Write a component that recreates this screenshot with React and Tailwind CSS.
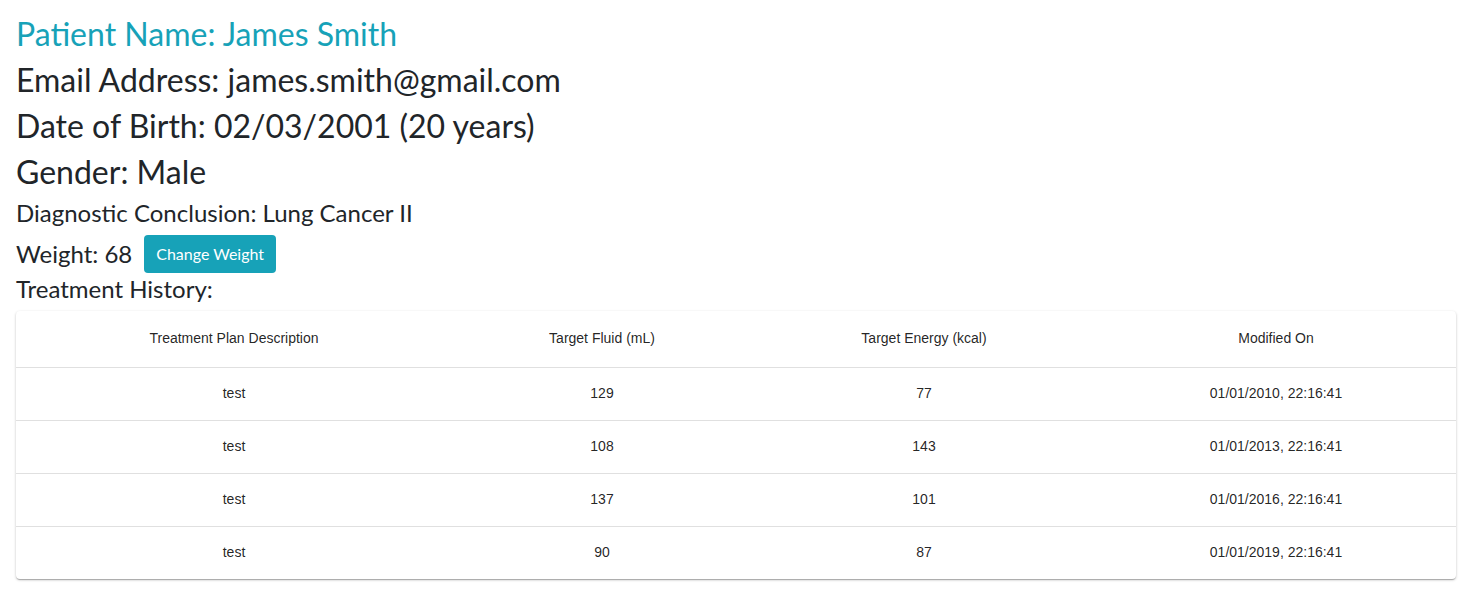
const rows = [
  { desc: "test", fluid: 129, energy: 77, modified: "01/01/2010, 22:16:41" },
  { desc: "test", fluid: 108, energy: 143, modified: "01/01/2013, 22:16:41" },
  { desc: "test", fluid: 137, energy: 101, modified: "01/01/2016, 22:16:41" },
  { desc: "test", fluid: 90, energy: 87, modified: "01/01/2019, 22:16:41" },
];

export default function App() {
  return (
    <div className="bg-white min-h-screen pl-4 pr-[27px] pt-[15px] text-[#212529] font-['Lato','Open_Sans',sans-serif]">
      <h2 className="text-[32px] leading-[38px] mb-2 text-[#17a2b8]">Patient Name: James Smith</h2>
      <h3 className="text-[32px] leading-[38px] mb-2">Email Address: james.smith@gmail.com</h3>
      <h3 className="text-[32px] leading-[38px] mb-2">Date of Birth: 02/03/2001 (20 years)</h3>
      <h3 className="text-[32px] leading-[38px] mb-2">Gender: Male</h3>
      <h4 className="text-[24px] leading-[29px] mb-2 -mt-[1px]">Diagnostic Conclusion: Lung Cancer II</h4>
      <div className="flex items-center gap-3 h-[38px] mt-[1px]">
        <span className="text-[24px] leading-[29px] -mt-[2px]">Weight: 68</span>
        <button className="bg-[#17a2b8] text-white text-[16px] h-[38px] px-[12px] rounded-[4px]">
          Change Weight
        </button>
      </div>
      <h4 className="text-[24px] leading-[29px] mt-[1px] mb-[8px]">Treatment History:</h4>
      <div className="rounded-[4px] bg-white shadow-[0_1px_3px_rgba(0,0,0,0.2),0_1px_1px_rgba(0,0,0,0.14),0_2px_1px_-1px_rgba(0,0,0,0.12)] overflow-hidden">
        <table className="w-full border-collapse font-['Liberation_Sans',Arial,sans-serif] text-[14px] text-[rgba(0,0,0,0.87)]">
          <thead>
            <tr className="h-[56px] border-b border-[#e0e0e0]">
              <th className="w-[436px] font-normal">Treatment Plan Description</th>
              <th className="w-[300px] font-normal">Target Fluid (mL)</th>
              <th className="w-[344px] font-normal">Target Energy (kcal)</th>
              <th className="font-normal">Modified On</th>
            </tr>
          </thead>
          <tbody>
            {rows.map((r, i) => (
              <tr key={i} className={`h-[53px] ${i < rows.length - 1 ? "border-b border-[#e0e0e0]" : ""}`}>
                <td className="text-center">{r.desc}</td>
                <td className="text-center">{r.fluid}</td>
                <td className="text-center">{r.energy}</td>
                <td className="text-center">{r.modified}</td>
              </tr>
            ))}
          </tbody>
        </table>
      </div>
    </div>
  );
}
